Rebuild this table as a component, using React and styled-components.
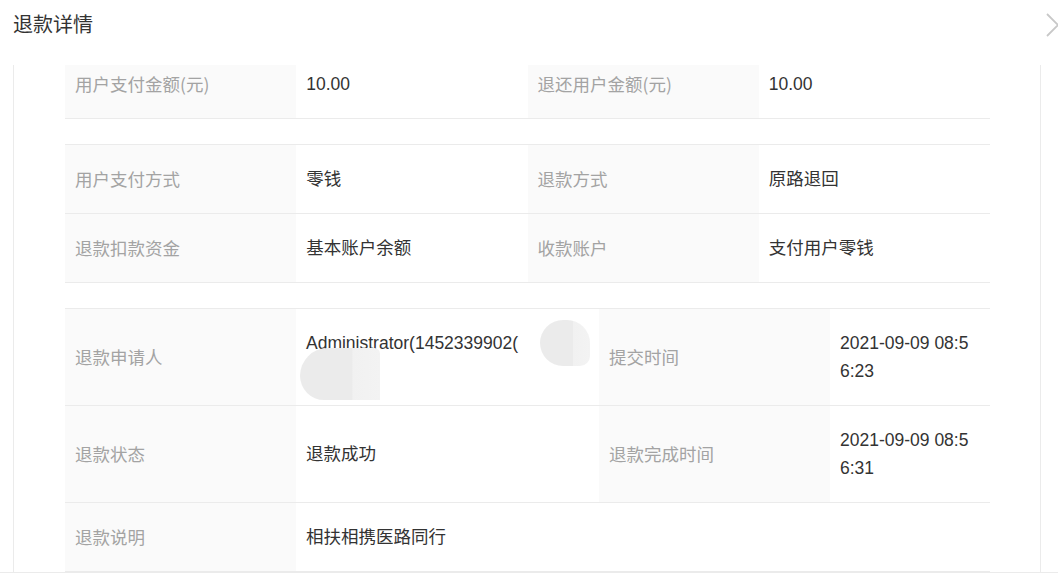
import React, { useLayoutEffect, useRef } from 'react';
import styled, { createGlobalStyle } from 'styled-components';

const GlobalStyle = createGlobalStyle`
    html, body {
        margin: 0;
        padding: 0;
        background: #fff;
        overflow: hidden;
    }
    body {
        font-family: "Liberation Sans", "Noto Sans CJK SC", sans-serif;
        color: #333;
    }
`;

const Modal = styled.div`
    width: 1058px;
    height: 579px;
    display: flex;
    flex-direction: column;
    overflow: hidden;
`;

const Header = styled.div`
    height: 65px;
    flex-shrink: 0;
    display: flex;
    justify-content: space-between;
    align-items: flex-start;
    padding-left: 13px;
    box-sizing: border-box;
`;

const Title = styled.h3`
    margin: 0;
    padding-top: 11px;
    font-size: 20px;
    line-height: 26px;
    font-weight: normal;
    color: #333;
    font-family: "Noto Sans CJK SC", sans-serif;
`;

const Close = styled.button`
    margin-top: 13px;
    margin-right: -13px;
    padding: 0;
    border: none;
    background: none;
    width: 26px;
    height: 24px;
    cursor: pointer;
`;

const Body = styled.div`
    height: 507px;
    margin: 0 17px 0 13px;
    border-left: 1px solid #ebebeb;
    border-right: 1px solid #ebebeb;
    overflow-y: auto;
    scrollbar-width: none;
    &::-webkit-scrollbar {
        display: none;
    }
`;

const Footer = styled.div`
    border-top: 1px solid #ebebeb;
    flex: 1;
`;

const Content = styled.div`
    padding: 0 50px 20px 51px;
`;

const Section = styled.div`
    display: grid;
    grid-template-columns: ${p => p.cols || 'repeat(4, 1fr)'};
    border-top: 1px solid #ebebeb;
    margin-bottom: 25px;
`;

const Cell = styled.div`
    display: flex;
    align-items: center;
    padding: 20px 10px;
    font-size: 17.5px;
    line-height: 28px;
    border-bottom: 1px solid #ebebeb;
    word-break: break-all;
    min-width: 0;
`;

const Label = styled(Cell)`
    background: #fafafa;
    color: #a3a3a3;
    font-family: "Noto Sans CJK SC", sans-serif;
`;

const Value = styled(Cell)`
    color: #333;
    position: relative;
    grid-column: span ${p => p.span || 1};
`;

const Blur = styled.span`
    position: absolute;
    left: ${p => p.x}px;
    top: ${p => p.y}px;
    width: ${p => p.w}px;
    height: ${p => p.h}px;
    border-radius: ${p => p.r};
    background: linear-gradient(90deg, #ebebeb 0%, #ebebeb 65%, #f1f1f1 66%, #f3f3f3 100%);
`;

const CloseIcon = () => (
    <svg width="26" height="24" viewBox="0 0 26 24">
        <path d="M2 1 L24 23 M24 1 L2 23" stroke="#c8c8c8" strokeWidth="1.8" fill="none" />
    </svg>
);

const App = () => {
    const bodyRef = useRef(null);

    useLayoutEffect(() => {
        if (bodyRef.current) bodyRef.current.scrollTop = 16;
    }, []);

    return (
        <Modal>
            <GlobalStyle />
            <Header>
                <Title>退款详情</Title>
                <Close aria-label="close"><CloseIcon /></Close>
            </Header>
            <Body ref={bodyRef}>
                <Content>
                    <Section>
                        <Label>用户支付金额(元)</Label>
                        <Value>10.00</Value>
                        <Label>退还用户金额(元)</Label>
                        <Value>10.00</Value>
                    </Section>
                    <Section>
                        <Label>用户支付方式</Label>
                        <Value>零钱</Value>
                        <Label>退款方式</Label>
                        <Value>原路退回</Value>
                        <Label>退款扣款资金</Label>
                        <Value>基本账户余额</Value>
                        <Label>收款账户</Label>
                        <Value>支付用户零钱</Value>
                    </Section>
                    <Section cols="231px 303px 231px 1fr">
                        <Label>退款申请人</Label>
                        <Value>
                            <span>Administrator(1452339902(<br />&nbsp;</span>
                            <Blur x={244} y={11} w={50} h={46} r="23px 23px 10px 23px" />
                            <Blur x={4} y={39} w={80} h={52} r="30px 6px 0 26px" />
                        </Value>
                        <Label>提交时间</Label>
                        <Value>2021-09-09 08:56:23</Value>
                        <Label>退款状态</Label>
                        <Value>退款成功</Value>
                        <Label>退款完成时间</Label>
                        <Value>2021-09-09 08:56:31</Value>
                        <Label>退款说明</Label>
                        <Value span={3}>相扶相携医路同行</Value>
                    </Section>
                </Content>
            </Body>
            <Footer />
        </Modal>
    );
};

export default App;
